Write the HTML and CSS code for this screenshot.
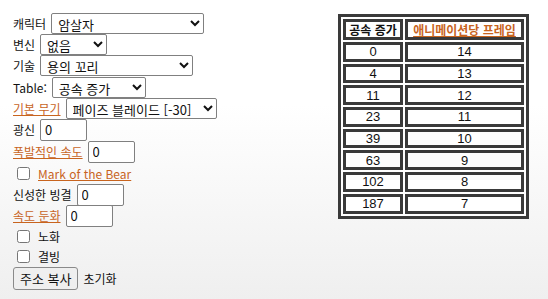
FILE: index.html
```html
<!DOCTYPE html>
<html lang="ko">
<head>
    <meta charset="UTF-8">
    <title>공속 계산기</title>
    <link rel="stylesheet" href="styles.css">
</head>
<body>
    <div class="page">
        <div class="form">
            <div class="row">
                <label>캐릭터</label>
                <select class="sel-char"><option>암살자</option></select>
            </div>
            <div class="row">
                <label>변신</label>
                <select class="sel-morph"><option>없음</option></select>
            </div>
            <div class="row">
                <label>기술</label>
                <select class="sel-skill"><option>용의 꼬리</option></select>
            </div>
            <div class="row">
                <label>Table:</label>
                <select class="sel-table"><option>공속 증가</option></select>
            </div>
            <div class="row">
                <a href="#">기본 무기</a>
                <select class="sel-weapon"><option>페이즈 블레이드 [-30]</option></select>
            </div>
            <div class="row tall">
                <label>광신</label>
                <input type="text" value="0">
            </div>
            <div class="row tall">
                <a href="#">폭발적인 속도</a>
                <input type="text" value="0">
            </div>
            <div class="row check">
                <input type="checkbox">
                <a href="#">Mark of the Bear</a>
            </div>
            <div class="row">
                <label>신성한 빙결</label>
                <input type="text" value="0">
            </div>
            <div class="row">
                <a href="#">속도 둔화</a>
                <input type="text" value="0">
            </div>
            <div class="row check short">
                <input type="checkbox">
                <label>노화</label>
            </div>
            <div class="row check short">
                <input type="checkbox">
                <label>결빙</label>
            </div>
            <div class="row buttons">
                <button>주소 복사</button>
                <span>초기화</span>
            </div>
        </div>

        <table class="frames">
            <tr>
                <th class="col-ias">공속 증가</th>
                <th class="col-fpa"><a href="#">애니메이션당 프레임</a></th>
            </tr>
            <tr><td>0</td><td>14</td></tr>
            <tr><td>4</td><td>13</td></tr>
            <tr><td>11</td><td>12</td></tr>
            <tr><td>23</td><td>11</td></tr>
            <tr><td>39</td><td>10</td></tr>
            <tr><td>63</td><td>9</td></tr>
            <tr><td>102</td><td>8</td></tr>
            <tr><td>187</td><td>7</td></tr>
        </table>
    </div>
</body>
</html>
```

FILE: styles.css
```css
html, body {
    height: 100%;
}
body {
    margin: 0;
    font-family: "Noto Sans CJK KR", "Noto Sans", sans-serif;
    font-size: 12px;
    color: #111;
    background: linear-gradient(to bottom, #ffffff 0%, #ffffff 35%, #efefef 100%);
    overflow: hidden;
}
a {
    color: #c8641e;
    text-decoration: underline;
}
.page {
    display: flex;
    align-items: flex-start;
    padding: 13px 0 0 13px;
}
.form {
    width: 325px;
    display: flex;
    flex-direction: column;
}
.row {
    display: flex;
    align-items: center;
    gap: 5px;
    height: 21.2px;
}
.row.tall {
    height: 22px;
}
.row.short {
    height: 20px;
}
.row.check {
    gap: 8px;
    padding-left: 4px;
}
.row.check input {
    margin: 0;
    width: 13px;
    height: 13px;
}
select, input[type="text"], button {
    font-family: "Noto Sans CJK KR", "Noto Sans", sans-serif;
    font-size: 13px;
    color: #111;
}
select {
    height: 21px;
    padding: 0 2px;
    border: 1px solid #808080;
    border-radius: 2px;
    background: #fff;
}
.sel-char { width: 153px; }
.sel-morph { width: 67px; }
.sel-skill { width: 153px; }
.sel-table { width: 94px; }
.sel-weapon { width: 151px; }
input[type="text"] {
    width: 47px;
    height: 22px;
    box-sizing: border-box;
    padding: 0 4px;
    margin: 0;
    border: 1px solid #808080;
    border-radius: 2px;
}
.row.buttons {
    height: 23px;
}
button {
    height: 23px;
    padding: 0 6px;
    border: 1px solid #8a8a8a;
    border-radius: 3px;
    background: #efefef;
}
.frames {
    margin-top: 1px;
    border: 3px solid #3a3a3a;
    border-spacing: 2px;
    background: #fff;
}
.frames th, .frames td {
    border: 3px solid #3a3a3a;
    padding: 0;
    height: 13.7px;
    text-align: center;
    font-family: "Liberation Sans", Arial, sans-serif;
    font-size: 13px;
    line-height: 13px;
}
.frames th {
    font-family: "Noto Sans CJK KR", sans-serif;
    font-size: 12px;
    font-weight: bold;
    height: 15px;
    white-space: nowrap;
}
.frames .col-ias {
    width: 54px;
}
.frames .col-fpa {
    width: 113px;
}
```
